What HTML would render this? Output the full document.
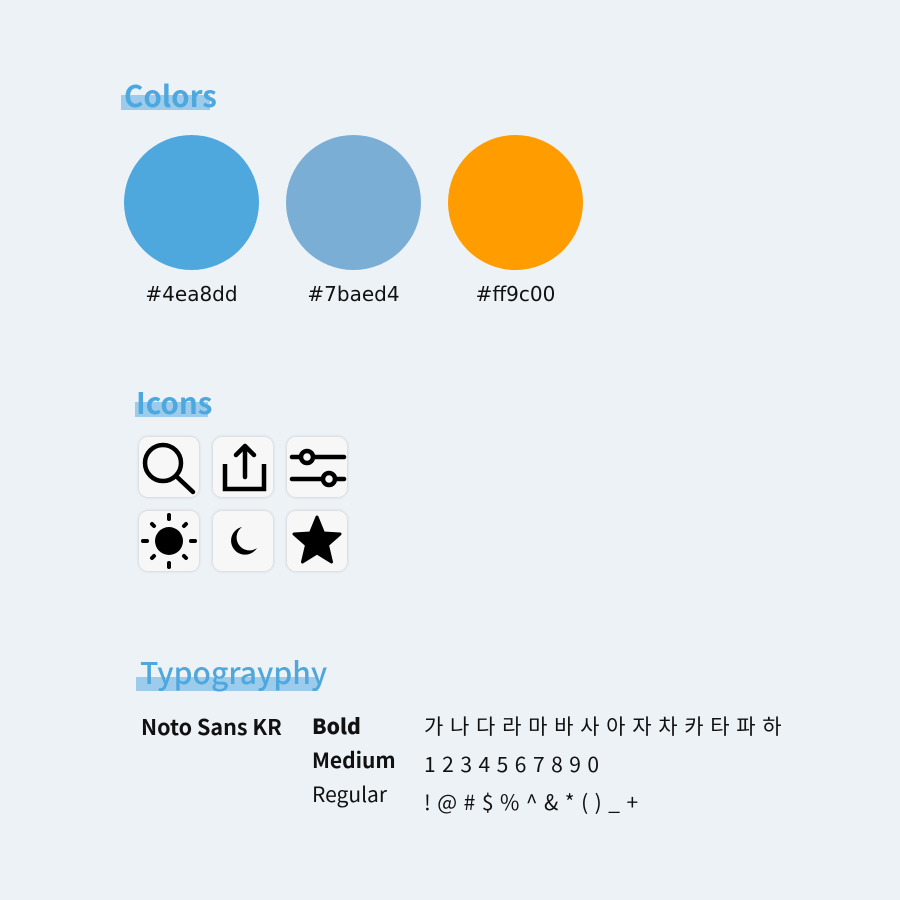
<!DOCTYPE html>
<html><head><meta charset="utf-8"><style>
*{margin:0;padding:0;box-sizing:border-box}
body{width:900px;height:900px;background:#edf2f7;position:relative;overflow:hidden;font-family:"Liberation Sans","Noto Sans CJK KR",sans-serif;color:#111}
.a{position:absolute;white-space:nowrap}
.h{font-family:"Noto Sans CJK KR",sans-serif;font-weight:700;font-size:29.5px;color:#4ea8dd;line-height:1}
.bar{position:absolute;background:#9ccbeb}
.c{position:absolute;width:135px;height:135px;border-radius:50%;top:135px}
.lb{position:absolute;top:282px;font-family:"DejaVu Sans",sans-serif;font-size:20px;color:#111;width:135px;text-align:center}
.box{position:absolute;width:60px;height:60px;border-radius:9px;background:#f7f7f7;box-shadow:0 0 3px rgba(0,0,0,.18)}
.box svg{position:absolute;left:0;top:0}
.t{font-family:"Noto Sans CJK KR",sans-serif;font-size:21px;line-height:1}
</style></head><body>
<div class="bar" style="left:121px;top:95px;width:89px;height:15px"></div>
<div class="a h" style="left:124px;top:81px">Colors</div>
<div class="c" style="left:124px;background:#4ea8dd"></div>
<div class="c" style="left:286px;background:#7baed4"></div>
<div class="c" style="left:448px;background:#ff9c00"></div>
<div class="lb" style="left:124px">#4ea8dd</div>
<div class="lb" style="left:286px">#7baed4</div>
<div class="lb" style="left:448px">#ff9c00</div>

<div class="bar" style="left:135px;top:402px;width:73px;height:15px"></div>
<div class="a h" style="left:136px;top:388px">Icons</div>

<div class="box" style="left:139px;top:437px"><svg width="60" height="60"><circle cx="24" cy="26" r="18" fill="none" stroke="#000" stroke-width="4.5"/><line x1="37" y1="39" x2="54" y2="55" stroke="#000" stroke-width="4.5" stroke-linecap="round"/></svg></div>
<div class="box" style="left:213px;top:437px"><svg width="60" height="60"><path d="M12 27V52H51V27" fill="none" stroke="#000" stroke-width="4.5"/><path d="M32 40V9M23 18L32 9L41 18" fill="none" stroke="#000" stroke-width="4.5" stroke-linecap="round" stroke-linejoin="round"/></svg></div>
<div class="box" style="left:287px;top:437px"><svg width="60" height="60"><line x1="5" y1="20" x2="57" y2="20" stroke="#000" stroke-width="4.5" stroke-linecap="round"/><line x1="5" y1="42" x2="57" y2="42" stroke="#000" stroke-width="4.5" stroke-linecap="round"/><circle cx="20" cy="20" r="6" fill="#f7f7f7" stroke="#000" stroke-width="4.5"/><circle cx="42" cy="42" r="6" fill="#f7f7f7" stroke="#000" stroke-width="4.5"/></svg></div>

<div class="box" style="left:139px;top:511px"><svg width="60" height="60"><circle cx="30" cy="30" r="14" fill="#000"/><g stroke="#000" stroke-width="4" stroke-linecap="round"><line x1="30" y1="4" x2="30" y2="8"/><line x1="30" y1="52" x2="30" y2="56"/><line x1="4" y1="30" x2="8" y2="30"/><line x1="52" y1="30" x2="56" y2="30"/><line x1="13" y1="13" x2="15" y2="15"/><line x1="45" y1="45" x2="47" y2="47"/><line x1="13" y1="47" x2="15" y2="45"/><line x1="45" y1="15" x2="47" y2="13"/></g></svg></div>
<div class="box" style="left:213px;top:511px"><svg width="60" height="60"><path d="M29 16A14 14 0 1 0 44 37A11 11 0 0 1 29 16Z" fill="#000"/></svg></div>
<div class="box" style="left:287px;top:511px"><svg width="60" height="60"><path d="M30 6L36.5 22L53 23L40.5 34L44.5 51L30 42L15.5 51L19.5 34L7 23L23.5 22Z" fill="#000" stroke="#000" stroke-width="3" stroke-linejoin="round"/></svg></div>

<div class="bar" style="left:136px;top:677px;width:182px;height:14px"></div>
<div class="a h" style="left:140px;top:656px;font-weight:500;font-size:30px">Typograyphy</div>

<div class="a t" style="left:141px;top:716px;font-weight:700;font-size:21.5px">Noto Sans KR</div>
<div class="a t" style="left:312px;top:716px;font-weight:900">Bold</div>
<div class="a t" style="left:312px;top:750px;font-weight:700">Medium</div>
<div class="a t" style="left:312px;top:784px;font-weight:400">Regular</div>
<div class="a t" style="left:424px;top:716px;letter-spacing:1px">가 나 다 라 마 바 사 아 자 차 카 타 파 하</div>
<div class="a t" style="left:424px;top:754px;letter-spacing:0.9px">1 2 3 4 5 6 7 8 9 0</div>
<div class="a t" style="left:424px;top:792px;letter-spacing:0.9px">! @ # $ % ^ &amp; * ( ) _ +</div>
</body></html>
